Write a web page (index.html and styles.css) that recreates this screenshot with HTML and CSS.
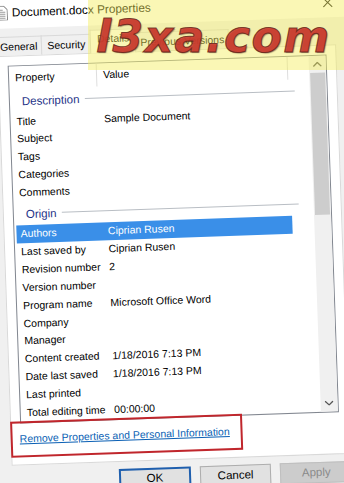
FILE: index.html
```html
<!DOCTYPE html>
<html lang="en">
<head>
  <meta charset="UTF-8">
  <title>Document.docx Properties</title>
  <link rel="stylesheet" href="styles.css">
</head>
<body>
  <div class="dialog">
    <div class="titlebar">
      <svg class="file-icon" width="12" height="15" viewBox="0 0 12 15">
        <path d="M0.5 0.5 H8 L11.5 4 V14.5 H0.5 Z" fill="#fff" stroke="#8a8a8a"/>
        <path d="M2.5 4.5 H7 M2.5 6.5 H9.5 M2.5 8.5 H9.5 M2.5 10.5 H9.5 M2.5 12.5 H9.5" stroke="#9c9c9c"/>
      </svg>
      <span class="title">Document.docx Properties</span>
      <svg class="close" width="10" height="10" viewBox="0 0 10 10">
        <path d="M0.5 0.5 L9.5 9.5 M9.5 0.5 L0.5 9.5" stroke="#111" stroke-width="1"/>
      </svg>
    </div>

    <div class="tabs">
      <div class="tab first">General</div>
      <div class="tab">Security</div>
      <div class="tab active">Details</div>
      <div class="tab">Previous Versions</div>
    </div>

    <div class="panel">
      <div class="list">
        <div class="list-body">
          <div class="list-head">
            <div class="col-prop">Property</div>
            <div class="col-val">Value</div>
          </div>

          <div class="group"><span>Description</span><i></i></div>
          <div class="row"><span>Title</span><span>Sample Document</span></div>
          <div class="row"><span>Subject</span><span></span></div>
          <div class="row"><span>Tags</span><span></span></div>
          <div class="row"><span>Categories</span><span></span></div>
          <div class="row"><span>Comments</span><span></span></div>

          <div class="group"><span>Origin</span><i></i></div>
          <div class="row selected"><span>Authors</span><span>Ciprian Rusen</span></div>
          <div class="row"><span>Last saved by</span><span>Ciprian Rusen</span></div>
          <div class="row"><span>Revision number</span><span>2</span></div>
          <div class="row"><span>Version number</span><span></span></div>
          <div class="row"><span>Program name</span><span>Microsoft Office Word</span></div>
          <div class="row"><span>Company</span><span></span></div>
          <div class="row"><span>Manager</span><span></span></div>
          <div class="row"><span>Content created</span><span>1/18/2016 7:13 PM</span></div>
          <div class="row"><span>Date last saved</span><span>1/18/2016 7:13 PM</span></div>
          <div class="row"><span>Last printed</span><span></span></div>
          <div class="row"><span>Total editing time</span><span>00:00:00</span></div>
        </div>

        <div class="scrollbar">
          <div class="sb-arrow">
            <svg width="9" height="5" viewBox="0 0 9 5"><polyline points="0.5,4.5 4.5,0.7 8.5,4.5" fill="none" stroke="#555" stroke-width="1.3"/></svg>
          </div>
          <div class="sb-thumb"></div>
          <div class="sb-track"></div>
          <div class="sb-arrow">
            <svg width="9" height="5" viewBox="0 0 9 5"><polyline points="0.5,0.5 4.5,4.3 8.5,0.5" fill="none" stroke="#555" stroke-width="1.3"/></svg>
          </div>
        </div>
      </div>

      <div class="remove-box">
        <a href="#">Remove Properties and Personal Information</a>
      </div>
    </div>

    <div class="buttons">
      <button class="btn default">OK</button>
      <button class="btn">Cancel</button>
      <button class="btn" disabled>Apply</button>
    </div>
  </div>

  <div class="stamp">l3xa.com</div>
</body>
</html>
```

FILE: styles.css
```css
* { box-sizing: border-box; }

body {
  margin: 0;
  overflow: hidden;
  background: #f0f0f0;
  font-family: "Liberation Sans", Arial, sans-serif;
  font-size: 10.5px;
  color: #000;
}

/* the window is a bit tilted, and a little larger than the view */
.dialog {
  width: 384px;
  height: 523px;
  margin: -17.5px -20px -20px;
  padding: 20px;
  background: #f0f0f0;
  transform: rotate(-2deg);
}

.titlebar {
  display: flex;
  align-items: center;
  height: 40px;
  margin: -20px -20px 0;
  padding: 17px 20px 8px 24px;
  background: #fff;
}
.file-icon { margin-right: 4px; flex: none; }
.title {
  font-size: 11.8px;
  line-height: 15px;
}
.close { margin-left: auto; margin-right: 3px; }

/* tabs */
.tabs {
  display: flex;
  align-items: flex-end;
  height: 28px;
  padding-left: 2px;
}
.tab {
  height: 19px;
  margin: 0 0 1px -1px;
  padding: 2px 5px 0;
  border: 1px solid #d9d9d9;
  border-bottom: none;
  background: #f0f0f0;
  line-height: 14px;
  white-space: nowrap;
}
.tab.first { margin-left: 0; padding: 2px 4px 0; }
.tab.active {
  position: relative;
  z-index: 1;
  height: 24px;
  margin-bottom: 0;
  padding: 1px 6px 0;
  background: #fff;
}
.tab.active + .tab { padding: 2px 4px 0; }

.panel {
  margin: -1px 1px 0 4px;
  padding: 9px 9px 7px;
  background: #fff;
  border: 1px solid #d9d9d9;
}

/* property list */
.list {
  display: flex;
  height: 358px;
  border: 1px solid #828790;
  overflow: hidden;
}
.list-body {
  flex: 1;
  overflow: hidden;
}
.list-head {
  display: flex;
  height: 23px;
  line-height: 23px;
}
.col-prop {
  width: 88px;
  padding-left: 6px;
  border-right: 1px solid #dedede;
}
.col-val {
  width: 191px;
  padding-left: 6px;
  border-right: 1px solid #dedede;
}

.group {
  display: flex;
  align-items: center;
  height: 23.6px;
  padding: 0 15px 0 12px;
  color: #1e3287;
  font-size: 11.5px;
}
.group i {
  flex: 1;
  height: 1px;
  margin-left: 5px;
  background: #b9bec4;
}

.row {
  display: grid;
  grid-template-columns: 87.5px 1fr;
  height: 17.85px;
  line-height: 17.85px;
  margin: 0 22px 0 2px;
  padding-left: 4px;
  white-space: nowrap;
}
.row.selected {
  background: #3a8fe8;
  color: #fff;
}

.scrollbar {
  display: flex;
  flex-direction: column;
  width: 17px;
  background: #f0f0f0;
}
.sb-arrow {
  display: flex;
  align-items: center;
  justify-content: center;
  height: 17px;
}
.sb-thumb {
  height: 142px;
  margin: 0 1px;
  background: #cdcdcd;
}
.sb-track { flex: 1; }

.remove-box {
  width: 232px;
  margin: -2px 0 0 -10px;
  padding: 7.7px 0 9.8px 7px;
  border: 2px solid #c0262c;
  line-height: 15px;
}
.remove-box a {
  color: #0a5fb4;
  text-decoration: underline;
}

/* dialog buttons */
.buttons {
  display: flex;
  gap: 9px;
  margin-top: 6.5px;
  padding-left: 111px;
}
.btn {
  width: 73px;
  height: 21px;
  padding: 0;
  font-family: "Liberation Sans", Arial, sans-serif;
  font-size: 11.5px;
  color: #000;
  background: #e1e1e1;
  border: 1px solid #adadad;
}
.btn.default { border: 2px solid #1f5fae; }
.btn:disabled {
  background: #cccccc;
  border-color: #bfbfbf;
  color: #8a8a8a;
}

/* site stamp over the top right corner */
.stamp {
  position: absolute;
  top: 0;
  left: 88px;
  width: 256px;
  height: 70px;
  padding: 15px 0 0 8px;
  background: rgba(245, 238, 90, 0.45);
  font: italic bold 44px/44px "DejaVu Sans", sans-serif;
  letter-spacing: 1.5px;
  color: rgba(208, 58, 46, 0.9);
  -webkit-text-stroke: 1px rgba(95, 30, 22, 0.8);
  text-shadow: 1px 1px 1px rgba(70, 20, 10, 0.5);
  white-space: nowrap;
}
```
